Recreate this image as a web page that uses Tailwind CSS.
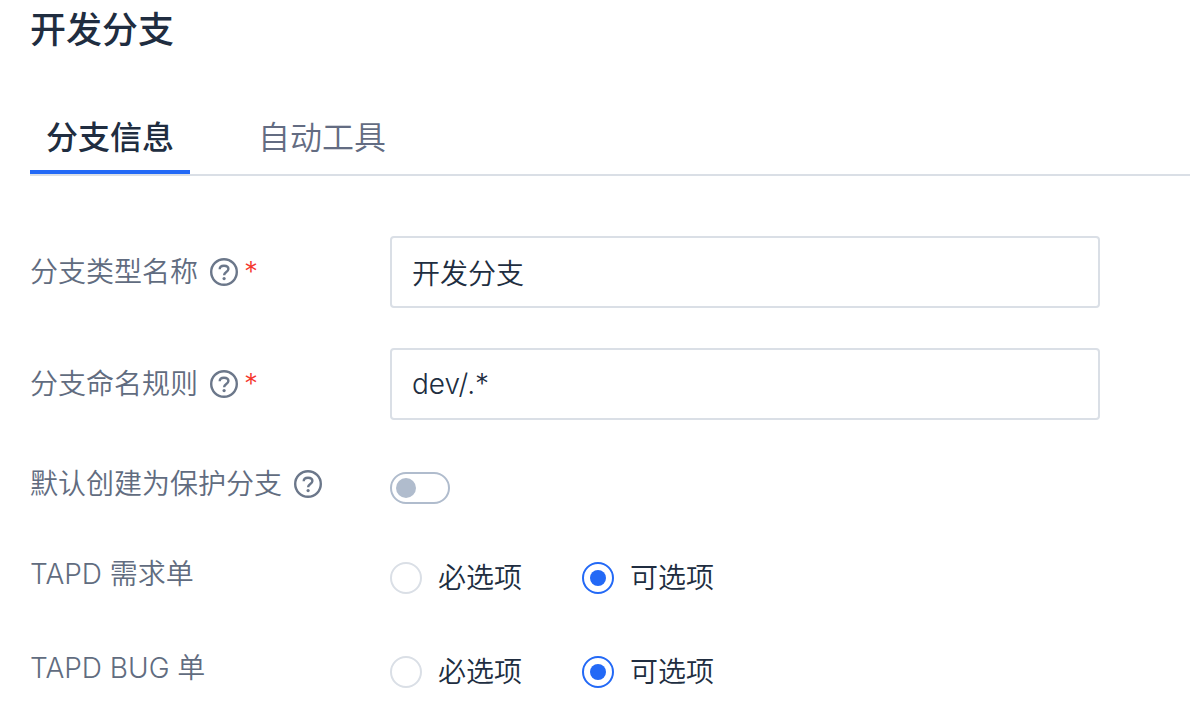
<!DOCTYPE html>
<html lang="zh-CN">
<head>
<meta charset="utf-8">
<meta name="viewport" content="width=device-width, initial-scale=1">
<title>开发分支</title>
<script src="https://cdn.jsdelivr.net/npm/@tailwindcss/browser@4"></script>
</head>
<body class="bg-white pl-[30px] font-['Inter','Noto_Sans_CJK_SC',sans-serif] text-[28px] leading-[42px] font-[350] text-[#202d40] overflow-x-hidden">
<svg class="hidden" aria-hidden="true">
  <symbol id="help" viewBox="0 0 28 28">
    <g fill="none" stroke="currentColor">
      <circle cx="14" cy="14" r="12.8" stroke-width="2.4"/>
      <path d="M9.7 11.3C9.7 9 11.5 7.7 14 7.7s4.4 1.3 4.4 3.4c0 3-4.3 3-4.3 6.2" stroke-width="2.4"/>
    </g>
    <circle cx="14.1" cy="20.6" r="1.6" fill="currentColor"/>
  </symbol>
</svg>
<h1 class="pt-1 text-4xl leading-[52px] font-medium">开发分支</h1>
<div role="tablist" class="mt-[42px] flex gap-[52px] border-b-2 border-[#dadfe6] text-[32px] leading-[48px]">
  <button type="button" role="tab" aria-selected="true" class="border-b-4 border-[#2369f6] px-4 pt-4 pb-2 font-medium">分支信息</button>
  <button type="button" role="tab" aria-selected="false" class="border-b-4 border-transparent px-4 pt-4 pb-2 text-[#636c82]">自动工具</button>
</div>
<form class="pt-[60px] pr-[90px]">
  <div class="flex items-center">
    <div class="flex w-[360px] shrink-0 items-center text-[#616c80]">
      <label for="type-name">分支类型名称</label>
      <svg class="ml-3 size-7 text-[#6b778a]" role="img" aria-label="帮助"><use href="#help"/></svg>
      <span class="ml-1.5 text-[#f5372c]">*</span>
    </div>
    <input id="type-name" type="text" value="开发分支" required class="h-[72px] min-w-0 flex-1 rounded border-2 border-[#dadfe6] px-5 outline-none">
  </div>
  <div class="mt-10 flex items-center">
    <div class="flex w-[360px] shrink-0 items-center text-[#616c80]">
      <label for="name-rule">分支命名规则</label>
      <svg class="ml-3 size-7 text-[#6b778a]" role="img" aria-label="帮助"><use href="#help"/></svg>
      <span class="ml-1.5 text-[#f5372c]">*</span>
    </div>
    <input id="name-rule" type="text" value="dev/.*" required class="h-[72px] min-w-0 flex-1 rounded border-2 border-[#dadfe6] px-5 outline-none">
  </div>
  <div class="mt-[43px] flex items-start">
    <div class="flex w-[360px] shrink-0 items-center text-[#616c80]">
      <label for="protect">默认创建为保护分支</label>
      <svg class="ml-3 size-7 text-[#6b778a]" role="img" aria-label="帮助"><use href="#help"/></svg>
    </div>
    <input id="protect" type="checkbox" role="switch" class="mt-[9px] flex h-8 w-[60px] appearance-none items-center rounded-full border-2 border-[#b0bccd] px-1 before:size-5 before:rounded-full before:bg-[#b0bccd] checked:justify-end">
  </div>
  <fieldset class="mt-12 flex items-start">
    <legend class="float-left w-[360px] shrink-0 text-[#616c80]">TAPD 需求单</legend>
    <div class="flex gap-[60px] pt-1">
      <label class="flex items-center gap-4"><input type="radio" name="story" class="flex size-8 appearance-none items-center justify-center rounded-full border-2 border-[#dadfe6] before:size-4 before:rounded-full checked:border-[#2369f6] checked:before:bg-[#2369f6]">必选项</label>
      <label class="flex items-center gap-4"><input type="radio" name="story" checked class="flex size-8 appearance-none items-center justify-center rounded-full border-2 border-[#dadfe6] before:size-4 before:rounded-full checked:border-[#2369f6] checked:before:bg-[#2369f6]">可选项</label>
    </div>
  </fieldset>
  <fieldset class="mt-12 flex items-start">
    <legend class="float-left w-[360px] shrink-0 text-[#616c80]">TAPD BUG 单</legend>
    <div class="flex gap-[60px] pt-1">
      <label class="flex items-center gap-4"><input type="radio" name="bug" class="flex size-8 appearance-none items-center justify-center rounded-full border-2 border-[#dadfe6] before:size-4 before:rounded-full checked:border-[#2369f6] checked:before:bg-[#2369f6]">必选项</label>
      <label class="flex items-center gap-4"><input type="radio" name="bug" checked class="flex size-8 appearance-none items-center justify-center rounded-full border-2 border-[#dadfe6] before:size-4 before:rounded-full checked:border-[#2369f6] checked:before:bg-[#2369f6]">可选项</label>
    </div>
  </fieldset>
</form>
</body>
</html>
